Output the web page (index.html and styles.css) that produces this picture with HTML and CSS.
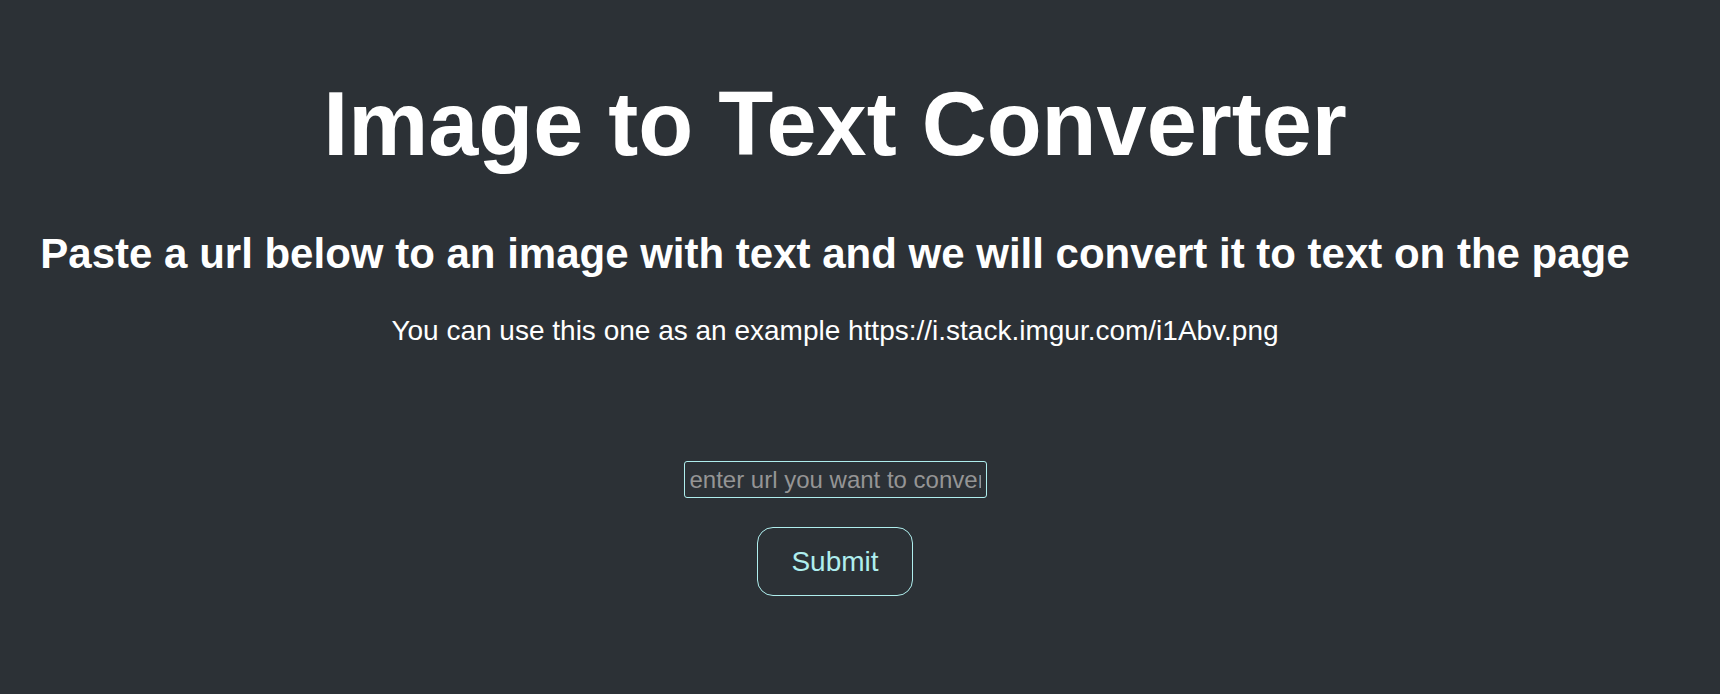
FILE: index.html
```html
<!DOCTYPE html>
<html lang="en">
<head>
<meta charset="utf-8">
<title>Image to Text Converter</title>
<link rel="stylesheet" href="styles.css">
</head>
<body>
<main class="app">
  <h1 class="title">Image to Text Converter</h1>
  <h2 class="subtitle">Paste a url below to an image with text and we will convert it to text on the page</h2>
  <p class="example">You can use this one as an example https://i.stack.imgur.com/i1Abv.png</p>
  <form class="form">
    <input class="url-input" type="text" placeholder="enter url you want to convert">
    <button class="submit" type="button">Submit</button>
  </form>
</main>
</body>
</html>
```

FILE: styles.css
```css
html, body {
  margin: 0;
  padding: 0;
  background: #2c3136;
  height: 100%;
}
body {
  font-family: "Liberation Sans", Arial, sans-serif;
  color: #ffffff;
}
.app {
  width: 1670px;
  text-align: center;
  padding-top: 73px;
}
.title {
  font-size: 90px;
  font-weight: 700;
  margin: 0;
  line-height: normal;
}
.subtitle {
  font-size: 42px;
  font-weight: 700;
  margin: 54px 0 0;
  line-height: normal;
}
.example {
  font-size: 28px;
  margin: 37px 0 0;
  line-height: normal;
}
.form {
  display: flex;
  flex-direction: column;
  align-items: center;
  margin-top: 114px;
}
.url-input {
  width: 303px;
  height: 37px;
  box-sizing: border-box;
  border: 1px solid #afeeee;
  border-radius: 3px;
  background: transparent;
  color: #ffffff;
  font-family: "Liberation Sans", Arial, sans-serif;
  font-size: 24px;
  padding: 0 5px;
  outline: none;
}
.url-input::placeholder {
  color: #959595;
}
.submit {
  margin-top: 29px;
  width: 156px;
  height: 69px;
  box-sizing: border-box;
  border: 1px solid #afeeee;
  border-radius: 16px;
  background: transparent;
  color: #afeeee;
  font-family: "Liberation Sans", Arial, sans-serif;
  font-size: 28px;
  padding: 0;
  cursor: pointer;
}
```
